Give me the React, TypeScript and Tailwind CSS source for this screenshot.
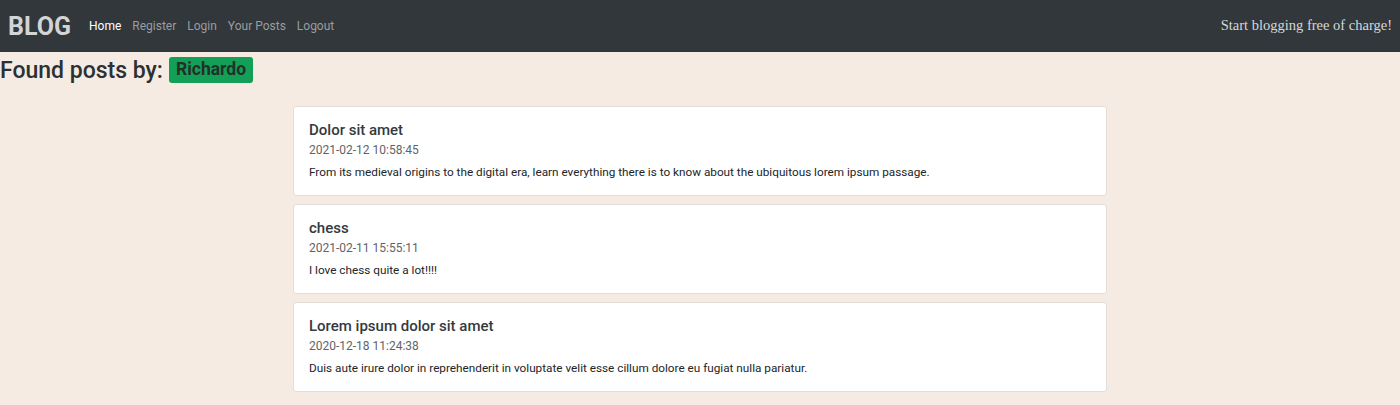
const posts = [
  {
    title: "Dolor sit amet",
    date: "2021-02-12 10:58:45",
    body: "From its medieval origins to the digital era, learn everything there is to know about the ubiquitous lorem ipsum passage.",
  },
  {
    title: "chess",
    date: "2021-02-11 15:55:11",
    body: "I love chess quite a lot!!!!",
  },
  {
    title: "Lorem ipsum dolor sit amet",
    date: "2020-12-18 11:24:38",
    body: "Duis aute irure dolor in reprehenderit in voluptate velit esse cillum dolore eu fugiat nulla pariatur.",
  },
];

export default function App() {
  return (
    <div className="min-h-[405px] bg-[#f5ebe2] font-['Roboto',sans-serif] text-[#212529]">
      {/* Navbar */}
      <nav className="h-[52px] bg-[#31373b] flex items-center justify-between pl-[8px] pr-[8px]">
        <div className="flex items-center">
          <span className="text-[25px] font-bold text-[#d2d4d5] leading-none mr-[18px]">BLOG</span>
          <ul className="flex items-center gap-[11px] text-[12px]">
            <li className="text-white">Home</li>
            <li className="text-[#9a9d9f]">Register</li>
            <li className="text-[#9a9d9f]">Login</li>
            <li className="text-[#9a9d9f]">Your Posts</li>
            <li className="text-[#9a9d9f]">Logout</li>
          </ul>
        </div>
        <span className="font-['Liberation_Serif',serif] text-[14.5px] text-[#d6d7d8]">
          Start blogging free of charge!
        </span>
      </nav>

      {/* Heading */}
      <h2 className="flex items-center text-[23px] font-medium leading-none mt-[5px] text-[#2b3034]">
        Found posts by:
        <span className="ml-[6px] bg-[#13a056] text-[#22302a] text-[17.5px] font-bold rounded-[3px] px-[7px] h-[26px] flex items-center">
          Richardo
        </span>
      </h2>

      {/* Posts */}
      <div className="w-[814px] mx-auto mt-[23px] flex flex-col gap-[8px] pb-[15px]">
        {posts.map((post) => (
          <div
            key={post.title}
            className="bg-white border border-[#e2ddd9] rounded-[3px] h-[90px] px-[15px] pt-[13px]"
          >
            <h5 className="text-[15px] font-medium leading-[20px] text-[#343a40]">{post.title}</h5>
            <div className="text-[12px] text-[#5f6468] leading-[18px] mt-[1px]">{post.date}</div>
            <p className="text-[11.75px] leading-[16px] mt-[5px]">{post.body}</p>
          </div>
        ))}
      </div>
    </div>
  );
}
